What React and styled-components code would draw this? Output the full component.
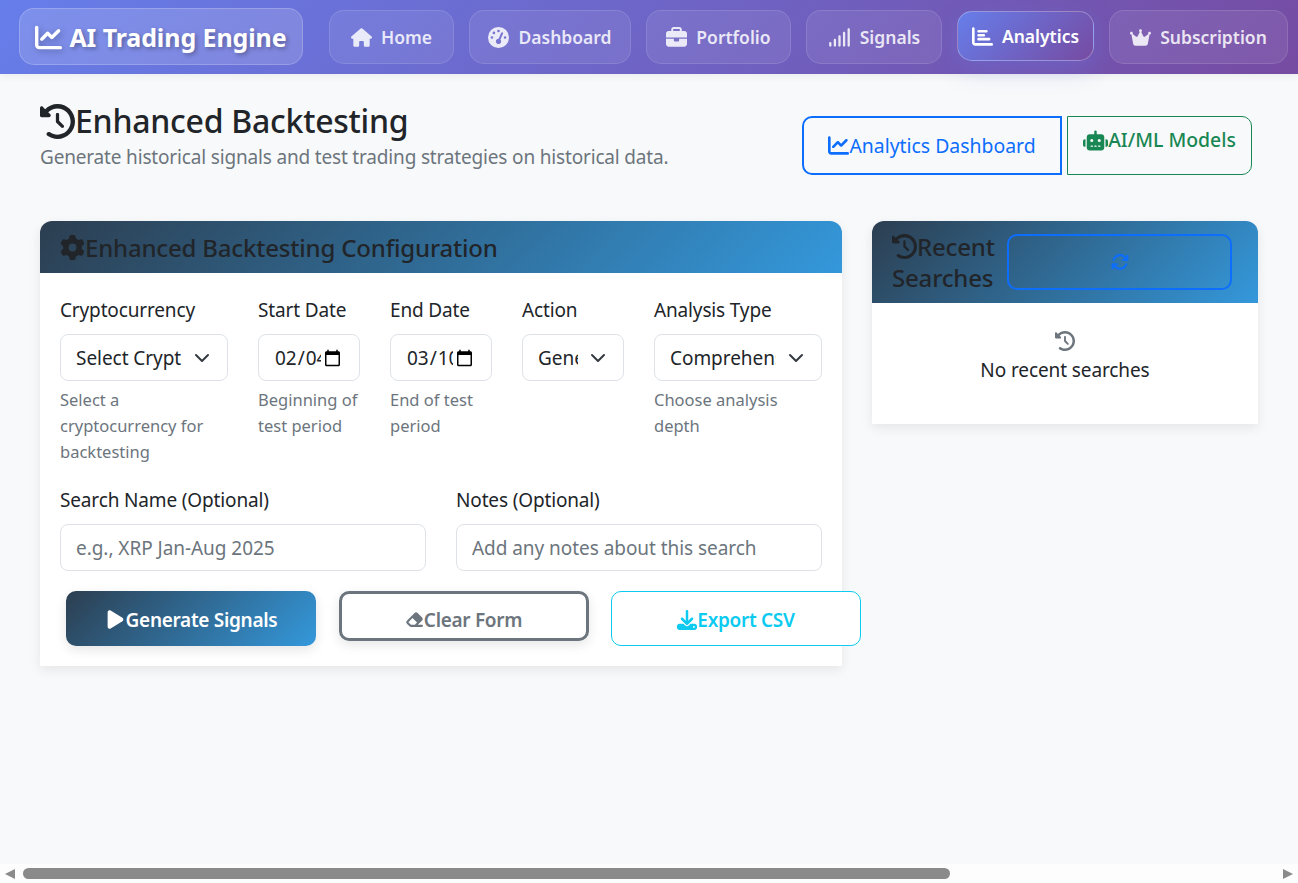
import styled, { createGlobalStyle } from "styled-components"
import {
  FaArrowsRotate,
  FaBriefcase,
  FaChartBar,
  FaChartLine,
  FaClockRotateLeft,
  FaCrown,
  FaDownload,
  FaEraser,
  FaGaugeHigh,
  FaGear,
  FaHouse,
  FaPlay,
  FaRobot,
  FaSignal,
} from "react-icons/fa6"

const chevron =
  "data:image/svg+xml,%3csvg xmlns='http://www.w3.org/2000/svg' viewBox='0 0 16 16'%3e%3cpath fill='none' stroke='%23343a40' stroke-linecap='round' stroke-linejoin='round' stroke-width='2' d='m2 5 6 6 6-6'/%3e%3c/svg%3e"

const GlobalStyle = createGlobalStyle`
  html, body {
    margin: 0;
    height: 100%;
    overflow: hidden;
  }
  body {
    background: #f8f9fa;
    color: #212529;
    font-family: "Noto Sans", "Open Sans", sans-serif;
  }
  * { box-sizing: border-box; }
`

const Page = styled.div`
  height: 100vh;
  display: flex;
  flex-direction: column;
`

const TopBar = styled.nav`
  height: 74px;
  flex: none;
  display: flex;
  align-items: center;
  padding-left: 19px;
  background: linear-gradient(135deg, #667eea 0%, #764ba2 100%);
  box-shadow: 0 2px 8px rgba(0, 0, 0, 0.06);
`

const Brand = styled.a`
  width: 284px;
  height: 57px;
  margin: -1px 26px 0 0;
  padding-top: 1px;
  display: flex;
  align-items: center;
  justify-content: center;
  gap: 7px;
  font-size: 25px;
  font-weight: 700;
  letter-spacing: -0.1px;
  color: #fff;
  text-shadow: 2px 2px 4px rgba(0, 0, 0, 0.3);
  background: rgba(255, 255, 255, 0.15);
  border: 1px solid rgba(255, 255, 255, 0.2);
  border-radius: 15px;

  svg { filter: drop-shadow(2px 2px 3px rgba(0, 0, 0, 0.25)); }
`

const NavLinks = styled.div`
  display: flex;
  align-items: center;
  gap: 15px;
`

const NavItem = styled.a`
  width: ${(p) => p.$w}px;
  height: ${(p) => (p.$active ? 50 : 54)}px;
  display: flex;
  align-items: center;
  justify-content: center;
  gap: 9px;
  font-size: 17.5px;
  font-weight: 600;
  color: ${(p) => (p.$active ? "#fff" : "rgba(255, 255, 255, 0.85)")};
  background: ${(p) =>
    p.$active ? "linear-gradient(135deg, #667eea, #764ba2)" : "rgba(255, 255, 255, 0.08)"};
  border: 1px solid ${(p) => (p.$active ? "rgba(255, 255, 255, 0.3)" : "rgba(255, 255, 255, 0.12)")};
  border-radius: 15px;
  box-shadow: ${(p) => (p.$active ? "0 8px 25px rgba(102, 126, 234, 0.3)" : "none")};
  transform: ${(p) => (p.$active ? "translateY(-1px)" : "none")};
`

const Main = styled.main`
  flex: 1;
  padding: 26px 40px 0;
`

const PageHeader = styled.header`
  display: flex;
  justify-content: space-between;
  align-items: flex-start;
  padding-right: 6px;
  margin-bottom: 46px;
`

const TitleBlock = styled.div`
  padding-top: 1px;
`

const PageTitle = styled.h1`
  margin: 0;
  display: flex;
  align-items: center;
  font-size: 32px;
  line-height: 40px;
  font-weight: 500;
  letter-spacing: -0.25px;
`

const Lead = styled.p`
  margin: 3px 0 0;
  font-size: 19px;
  line-height: 26px;
  letter-spacing: -0.17px;
  color: #6c757d;
`

const HeaderActions = styled.div`
  display: flex;
  align-items: flex-start;
  gap: 5px;
  margin-top: 16px;
`

const OutlineLink = styled.a`
  height: 59px;
  display: flex;
  justify-content: center;
  align-items: ${(p) => (p.$top ? "flex-start" : "center")};
  padding-top: ${(p) => (p.$top ? "9px" : "0")};
  width: ${(p) => p.$w}px;
  font-size: 19.4px;
  font-weight: ${(p) => (p.$top ? 500 : 400)};
  line-height: 28px;
  color: ${(p) => p.$color};
  border: ${(p) => p.$border}px solid ${(p) => p.$color};
  border-radius: ${(p) => (p.$top ? "0 10px 10px 0" : "10px 0 0 10px")};
`

const LinkIcon = styled.span`
  display: inline-flex;
  margin-top: ${(p) => p.$top || 0}px;
`

const Columns = styled.div`
  display: flex;
  align-items: flex-start;
  gap: 30px;
`

const Card = styled.section`
  width: ${(p) => p.$w}px;
  background: #fff;
  border-radius: 12px 12px 0 0;
  box-shadow: 0 4px 12px rgba(0, 0, 0, 0.08);
`

const CardHeader = styled.div`
  display: flex;
  align-items: center;
  height: ${(p) => p.$h}px;
  padding: 0 26px 0 20px;
  border-radius: 12px 12px 0 0;
  background: linear-gradient(135deg, #2c3e50, #3498db);
`

const CardTitle = styled.h5`
  flex: 1;
  min-width: 0;
  margin: 0;
  font-size: 24px;
  line-height: 31px;
  font-weight: 500;
  letter-spacing: -0.18px;
  color: #212529;
`

const TitleIcon = styled.span`
  display: inline-flex;
  vertical-align: -3px;
`

const NoWrap = styled.span`
  white-space: nowrap;
`

const CardBody = styled.div`
  padding: 20px;
`

const FieldRow = styled.div`
  display: grid;
  grid-template-columns: 168px 102px 102px 102px 168px;
  gap: 30px;
  margin-bottom: 18px;
`

const FieldRowWide = styled.div`
  display: grid;
  grid-template-columns: 366px 366px;
  gap: 30px;
  margin-bottom: 20px;
`

const Field = styled.div`
  min-width: 0;
`

const Label = styled.label`
  display: block;
  height: 34px;
  margin-bottom: 7px;
  font-size: 19px;
  line-height: 34px;
  letter-spacing: -0.15px;
`

const controlStyles = `
  display: block;
  width: 100%;
  height: 47px;
  font-family: inherit;
  font-size: 19px;
  letter-spacing: -0.05px;
  color: #212529;
  background-color: #fff;
  border: 1px solid #dee2e6;
  border-radius: 8px;
  outline: none;
`

const Select = styled.select`
  ${controlStyles}
  appearance: none;
  padding: 0 45px 0 15px;
  background-image: url("${chevron}");
  background-repeat: no-repeat;
  background-position: right 17px center;
  background-size: 16px 16px;
`

const TextInput = styled.input`
  ${controlStyles}
  padding: 1px 15px 0;

  &::placeholder {
    color: #6c757d;
    opacity: 1;
  }
`

const Help = styled.div`
  margin-top: 6px;
  font-size: 16.5px;
  line-height: 26px;
  color: #6c757d;
`

const ActionRow = styled.div`
  display: flex;
  align-items: flex-start;
  gap: 22.5px;
  padding-left: 6px;
`

const ActionButton = styled.button`
  flex: none;
  width: 250px;
  height: ${(p) => (p.$short ? 50 : 55)}px;
  display: flex;
  align-items: center;
  justify-content: center;
  padding: ${(p) => (p.$short ? "7px 0 0" : "2px 0 0")};
  font-family: inherit;
  font-size: 19px;
  font-weight: 600;
  letter-spacing: -0.3px;
  border-radius: 10px;

  svg { width: auto; }
`

const PrimaryButton = styled(ActionButton)`
  color: #fff;
  border: 0;
  background: linear-gradient(135deg, #2c3e50, #3498db);
  box-shadow: 0 4px 12px rgba(0, 0, 0, 0.1);
`

const SecondaryButton = styled(ActionButton)`
  color: #6c757d;
  background: #fff;
  border: 3px solid #6c757d;
  box-shadow: 0 4px 12px rgba(0, 0, 0, 0.1);
`

const InfoButton = styled(ActionButton)`
  color: #0dcaf0;
  background: #fff;
  border: 1px solid #0dcaf0;
`

const RefreshButton = styled.button`
  flex: none;
  width: 225px;
  height: 56px;
  display: flex;
  align-items: center;
  justify-content: center;
  color: #0d6efd;
  background: transparent;
  border: 2px solid #0d6efd;
  border-radius: 10px;
`

const EmptyState = styled.div`
  height: 121px;
  padding-top: 28px;
  display: flex;
  flex-direction: column;
  align-items: center;
  gap: 6px;
  font-size: 19px;
  line-height: 26px;
  letter-spacing: -0.1px;
  color: #212529;

  svg { color: #6c757d; }
`

const ScrollTrack = styled.div`
  flex: none;
  height: 19px;
  display: flex;
  align-items: center;
  justify-content: space-between;
  padding: 0 5px;
  background: #fdfdfd;
`

const ScrollThumb = styled.div`
  width: 927px;
  height: 11px;
  margin: 0 auto 0 8px;
  background: #8a8a8a;
  border-radius: 6px;
`

const ScrollArrow = styled.span`
  width: 0;
  height: 0;
  border-top: 5.5px solid transparent;
  border-bottom: 5.5px solid transparent;
  border-${(p) => (p.$left ? "right" : "left")}: 10px solid #8a8a8a;
`

const navLinks = [
  { label: "Home", icon: FaHouse, w: 125, size: 21 },
  { label: "Dashboard", icon: FaGaugeHigh, w: 162, size: 21 },
  { label: "Portfolio", icon: FaBriefcase, w: 145, size: 21 },
  { label: "Signals", icon: FaSignal, w: 136, size: 23 },
  { label: "Analytics", icon: FaChartBar, w: 137, size: 21, active: true },
  { label: "Subscription", icon: FaCrown, w: 179, size: 21 },
]

export default function App() {
  return (
    <Page>
      <GlobalStyle />
      <TopBar>
        <Brand>
          <FaChartLine size={27} />
          AI Trading Engine
        </Brand>
        <NavLinks>
          {navLinks.map(({ label, icon: Icon, w, size, active }) => (
            <NavItem key={label} $w={w} $active={active}>
              <Icon size={size} />
              {label}
            </NavItem>
          ))}
        </NavLinks>
      </TopBar>

      <Main>
        <PageHeader>
          <TitleBlock>
            <PageTitle>
              <FaClockRotateLeft size={35} />
              Enhanced Backtesting
            </PageTitle>
            <Lead>Generate historical signals and test trading strategies on historical data.</Lead>
          </TitleBlock>
          <HeaderActions>
            <OutlineLink $w={260} $border={2} $color="#0d6efd">
              <LinkIcon>
                <FaChartLine size={21} />
              </LinkIcon>
              Analytics Dashboard
            </OutlineLink>
            <OutlineLink $w={185} $border={1} $color="#198754" $top>
              <LinkIcon $top={2}>
                <FaRobot size={25} />
              </LinkIcon>
              AI/ML Models
            </OutlineLink>
          </HeaderActions>
        </PageHeader>

        <Columns>
          <Card $w={802}>
            <CardHeader $h={52}>
              <CardTitle>
                <TitleIcon>
                  <FaGear size={25} />
                </TitleIcon>
                Enhanced Backtesting Configuration
              </CardTitle>
            </CardHeader>
            <CardBody>
              <FieldRow>
                <Field>
                  <Label>Cryptocurrency</Label>
                  <Select defaultValue="">
                    <option value="">Select Cryptocurrency</option>
                  </Select>
                  <Help>Select a cryptocurrency for backtesting</Help>
                </Field>
                <Field>
                  <Label>Start Date</Label>
                  <TextInput type="date" defaultValue="2025-02-04" />
                  <Help>Beginning of test period</Help>
                </Field>
                <Field>
                  <Label>End Date</Label>
                  <TextInput type="date" defaultValue="2025-03-10" />
                  <Help>End of test period</Help>
                </Field>
                <Field>
                  <Label>Action</Label>
                  <Select defaultValue="generate">
                    <option value="generate">Generate Signals</option>
                  </Select>
                </Field>
                <Field>
                  <Label>Analysis Type</Label>
                  <Select defaultValue="full">
                    <option value="full">Comprehensive Analysis</option>
                  </Select>
                  <Help>Choose analysis depth</Help>
                </Field>
              </FieldRow>
              <FieldRowWide>
                <Field>
                  <Label>Search Name (Optional)</Label>
                  <TextInput placeholder="e.g., XRP Jan-Aug 2025" />
                </Field>
                <Field>
                  <Label>Notes (Optional)</Label>
                  <TextInput placeholder="Add any notes about this search" />
                </Field>
              </FieldRowWide>
              <ActionRow>
                <PrimaryButton>
                  <FaPlay size={21} />
                  Generate Signals
                </PrimaryButton>
                <SecondaryButton $short>
                  <FaEraser size={19} />
                  Clear Form
                </SecondaryButton>
                <InfoButton>
                  <FaDownload size={20} />
                  Export CSV
                </InfoButton>
              </ActionRow>
            </CardBody>
          </Card>

          <Card $w={386}>
            <CardHeader $h={82}>
              <CardTitle>
                <NoWrap>
                  <TitleIcon>
                    <FaClockRotateLeft size={25} />
                  </TitleIcon>
                  Recent
                </NoWrap>{" "}
                Searches
              </CardTitle>
              <RefreshButton>
                <FaArrowsRotate size={18} />
              </RefreshButton>
            </CardHeader>
            <EmptyState>
              <FaClockRotateLeft size={20} />
              No recent searches
            </EmptyState>
          </Card>
        </Columns>
      </Main>

      <ScrollTrack>
        <ScrollArrow $left />
        <ScrollThumb />
        <ScrollArrow />
      </ScrollTrack>
    </Page>
  )
}
